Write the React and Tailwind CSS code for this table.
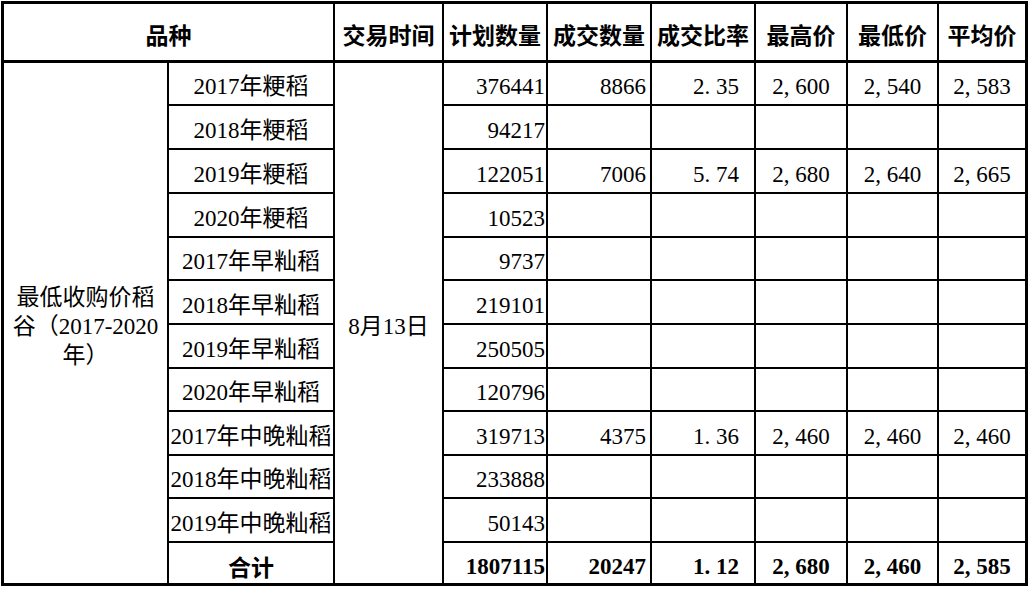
import React from 'react';

const rows = [
  { name: '2017年粳稻', plan: '376441', deal: '8866', rate: '2. 35', high: '2, 600', low: '2, 540', avg: '2, 583', h: 'h-[43px]' },
  { name: '2018年粳稻', plan: '94217', h: 'h-[44px]' },
  { name: '2019年粳稻', plan: '122051', deal: '7006', rate: '5. 74', high: '2, 680', low: '2, 640', avg: '2, 665', h: 'h-[44px]' },
  { name: '2020年粳稻', plan: '10523', h: 'h-[44px]' },
  { name: '2017年早籼稻', plan: '9737', h: 'h-[43px]' },
  { name: '2018年早籼稻', plan: '219101', h: 'h-[44px]' },
  { name: '2019年早籼稻', plan: '250505', h: 'h-[44px]' },
  { name: '2020年早籼稻', plan: '120796', h: 'h-[43px]' },
  { name: '2017年中晚籼稻', plan: '319713', deal: '4375', rate: '1. 36', high: '2, 460', low: '2, 460', avg: '2, 460', h: 'h-[44px]' },
  { name: '2018年中晚籼稻', plan: '233888', h: 'h-[43px]' },
  { name: '2019年中晚籼稻', plan: '50143', h: 'h-[44px]' },
];

const cell = 'border-r-2 border-b-2 border-black p-0 pt-[6px] align-middle';
const head = 'border-r-2 border-b-[3px] border-black p-0 pt-[5px]';

export default function App() {
  return (
    <div className="bg-white w-[1031px] h-[589px] pt-[1px] pl-[1px]">
      <div className="w-[1027px] border-[3px] border-black">
        <table
          className="table-fixed border-separate border-spacing-0 w-[1021px] text-black text-[23px] leading-none"
          style={{ fontFamily: '"Liberation Serif", "Noto Sans CJK SC", serif' }}
        >
          <colgroup>
            <col className="w-[165px]" />
            <col className="w-[166px]" />
            <col className="w-[109px]" />
            <col className="w-[104px]" />
            <col className="w-[104px]" />
            <col className="w-[104px]" />
            <col className="w-[92px]" />
            <col className="w-[91px]" />
            <col className="w-[86px]" />
          </colgroup>
          <thead>
            <tr className="h-[59px] font-bold text-center" style={{ fontFamily: '"Noto Sans CJK SC", sans-serif' }}>
              <th colSpan={2} className={head}>品种</th>
              <th className={head}>交易时间</th>
              <th className={head}>计划数量</th>
              <th className={head}>成交数量</th>
              <th className={head}>成交比率</th>
              <th className={head}>最高价</th>
              <th className={head}>最低价</th>
              <th className="border-b-[3px] border-black p-0 pt-[5px]">平均价</th>
            </tr>
          </thead>
          <tbody>
            {rows.map((r, i) => (
              <tr key={r.name} className={r.h}>
                {i === 0 && (
                  <td rowSpan={12} className="border-r-2 border-black p-0 pt-[6px] text-center align-middle leading-[29px]">
                    最低收购价稻
                    <br />
                    谷（2017-2020
                    <br />
                    年）
                  </td>
                )}
                <td className={`${cell} text-center whitespace-nowrap`}>{r.name}</td>
                {i === 0 && (
                  <td rowSpan={12} className="border-r-2 border-black p-0 pt-[6px] text-center align-middle">
                    8月13日
                  </td>
                )}
                <td className={`${cell} text-right pr-[1px]`}>{r.plan}</td>
                <td className={`${cell} text-right pr-[4px]`}>{r.deal}</td>
                <td className={`${cell} text-right pr-[15px] whitespace-pre`}>{r.rate}</td>
                <td className={`${cell} text-center whitespace-pre`}>{r.high}</td>
                <td className={`${cell} text-center whitespace-pre`}>{r.low}</td>
                <td className="border-b-2 border-black p-0 pt-[6px] text-center whitespace-pre">{r.avg}</td>
              </tr>
            ))}
            <tr className="h-[40px] font-bold">
              <td className="border-r-2 border-black p-0 pt-[6px] text-center" style={{ fontFamily: '"Noto Sans CJK SC", sans-serif' }}>合计</td>
              <td className="border-r-2 border-black p-0 pt-[6px] text-right pr-[1px]">1807115</td>
              <td className="border-r-2 border-black p-0 pt-[6px] text-right pr-[4px]">20247</td>
              <td className="border-r-2 border-black p-0 pt-[6px] text-right pr-[15px] whitespace-pre">1. 12</td>
              <td className="border-r-2 border-black p-0 pt-[6px] text-center whitespace-pre">2, 680</td>
              <td className="border-r-2 border-black p-0 pt-[6px] text-center whitespace-pre">2, 460</td>
              <td className="p-0 pt-[6px] text-center whitespace-pre">2, 585</td>
            </tr>
          </tbody>
        </table>
      </div>
    </div>
  );
}
